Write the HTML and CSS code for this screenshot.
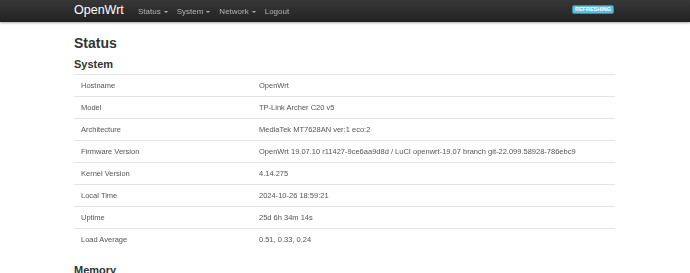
FILE: index.html
```html
<!DOCTYPE html>
<html>
<head>
<meta charset="utf-8">
<title>OpenWrt - Status</title>
<link rel="stylesheet" href="styles.css">
</head>
<body>
<header class="navbar">
  <div class="container nav-inner">
    <a class="brand">OpenWrt</a>
    <ul class="menu">
      <li>Status <span class="caret"></span></li>
      <li>System <span class="caret"></span></li>
      <li>Network <span class="caret"></span></li>
      <li>Logout</li>
    </ul>
    <span class="badge">REFRESHING</span>
  </div>
</header>
<main class="container">
  <h1>Status</h1>
  <h2>System</h2>
  <div class="table">
    <div class="tr"><div class="td left">Hostname</div><div class="td">OpenWrt</div></div>
    <div class="tr"><div class="td left">Model</div><div class="td">TP-Link Archer C20 v5</div></div>
    <div class="tr"><div class="td left">Architecture</div><div class="td">MediaTek MT7628AN ver:1 eco:2</div></div>
    <div class="tr"><div class="td left">Firmware Version</div><div class="td">OpenWrt 19.07.10 r11427-9ce6aa9d8d / LuCI openwrt-19.07 branch git-22.099.58928-786ebc9</div></div>
    <div class="tr"><div class="td left">Kernel Version</div><div class="td">4.14.275</div></div>
    <div class="tr"><div class="td left">Local Time</div><div class="td">2024-10-26 18:59:21</div></div>
    <div class="tr"><div class="td left">Uptime</div><div class="td">25d 6h 34m 14s</div></div>
    <div class="tr"><div class="td left">Load Average</div><div class="td">0.51, 0.33, 0.24</div></div>
  </div>
  <h2 class="section">Memory</h2>
</main>
</body>
</html>
```
FILE: styles.css
```css
* { box-sizing: border-box; }
html, body { margin: 0; padding: 0; }
body {
  font-family: "Liberation Sans", Arial, sans-serif;
  color: #404040;
  background: #fff;
  overflow: hidden;
  height: 273px;
}
.container {
  width: 541px;
  margin: 0 auto 0 74px;
}
.navbar {
  height: 22px;
  background: linear-gradient(#373737, #222);
  box-shadow: 0 1px 2px rgba(0,0,0,0.35);
}
.nav-inner {
  display: flex;
  align-items: center;
  height: 22px;
}
.brand {
  color: #fff;
  font-size: 12.5px;
  margin-right: 14px;
  margin-top: -2px;
}
.menu {
  display: flex;
  list-style: none;
  margin: 0;
  padding: 0;
  gap: 9px;
  font-size: 8px;
  color: #b5b5b5;
  will-change: transform;
}
.menu li { display: flex; align-items: center; }
.caret {
  display: inline-block;
  width: 0; height: 0;
  border-left: 2px solid transparent;
  border-right: 2px solid transparent;
  border-top: 2px solid #b5b5b5;
  margin-left: 3px;
  margin-top: 1px;
}
.badge {
  margin-left: auto;
  margin-right: 1px;
  background: #5bc0de;
  color: #fff;
  font-size: 5.5px;
  font-weight: bold;
  line-height: 7px;
  height: 9px;
  padding: 0 2px;
  border-radius: 2px;
  border: 1px solid #3a8aa8;
  margin-top: -3px;
}
h1 {
  margin: 0;
  padding-top: 13px;
  font-size: 14px;
  font-weight: bold;
  color: #333;
  line-height: 16px;
}
h2 {
  margin: 0;
  padding-top: 7px;
  font-size: 11px;
  font-weight: bold;
  color: #333;
  line-height: 13px;
  height: 23px;
}
.table {
  font-size: 7.5px;
  color: #555;
  will-change: transform;
}
.tr {
  display: flex;
  height: 22px;
  align-items: center;
  border-top: 1px solid #e4e4e4;
  white-space: nowrap;
}
.td { padding-left: 7px; }
.td.left { width: 178px; }
h2.section { padding-top: 14px; }
```
